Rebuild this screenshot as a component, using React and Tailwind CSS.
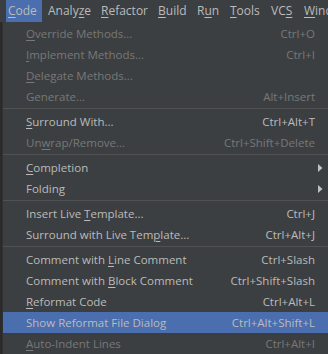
import React from 'react';

const menuBar = [
  { pre: '', key: 'C', post: 'ode', w: 'w-[36px] mr-[4px]', active: true },
  { pre: 'Analy', key: 'z', post: 'e', w: 'w-[53px]' },
  { pre: '', key: 'R', post: 'efactor', w: 'w-[57px]' },
  { pre: '', key: 'B', post: 'uild', w: 'w-[39px]' },
  { pre: 'R', key: 'u', post: 'n', w: 'w-[33px]' },
  { pre: '', key: 'T', post: 'ools', w: 'w-[41px]' },
  { pre: 'VC', key: 'S', post: '', w: 'w-[33px]' },
  { pre: '', key: 'W', post: 'indow', w: 'w-[60px]' },
];

// each group is separated by a line
const groups = [
  [
    { pre: '', key: 'O', post: 'verride Methods...', sc: 'Ctrl+O', off: true },
    { pre: '', key: 'I', post: 'mplement Methods...', sc: 'Ctrl+I', off: true },
    { pre: '', key: 'D', post: 'elegate Methods...', off: true },
    { pre: 'Generate...', sc: 'Alt+Insert', off: true },
  ],
  [
    { pre: '', key: 'S', post: 'urround With...', sc: 'Ctrl+Alt+T' },
    { pre: 'Un', key: 'w', post: 'rap/Remove...', sc: 'Ctrl+Shift+Delete', off: true },
  ],
  [
    { pre: '', key: 'C', post: 'ompletion', sub: true },
    { pre: 'Folding', sub: true },
  ],
  [
    { pre: 'Insert Live ', key: 'T', post: 'emplate...', sc: 'Ctrl+J' },
    { pre: 'Surround with Live Tem', key: 'p', post: 'late...', sc: 'Ctrl+Alt+J' },
  ],
  [
    { pre: 'Comment with ', key: 'L', post: 'ine Comment', sc: 'Ctrl+Slash' },
    { pre: 'Comment with ', key: 'B', post: 'lock Comment', sc: 'Ctrl+Shift+Slash' },
    { pre: '', key: 'R', post: 'eformat Code', sc: 'Ctrl+Alt+L' },
    { pre: 'Show Reformat File Dialog', sc: 'Ctrl+Alt+Shift+L', hot: true },
    { pre: '', key: 'A', post: 'uto-Indent Lines', sc: 'Ctrl+Alt+I', off: true },
  ],
];

const Label = ({ pre, k, post }) => (
  <span className="whitespace-nowrap">
    {pre}
    {k && <span className="underline underline-offset-2">{k}</span>}
    {post}
  </span>
);

const MenuRow = ({ item }) => (
  <div
    className={`flex items-center h-[21px] pl-[23px] pr-[13px] ${item.hot ? 'bg-[#4b6eaf]' : ''} ${item.off ? 'text-[#787878]' : 'text-[#bbbbbb]'}`}
  >
    <Label pre={item.pre} k={item.key} post={item.post} />
    <span className="flex-1" />
    {item.sc && <span className="whitespace-nowrap">{item.sc}</span>}
    {item.sub && (
      <svg width="5" height="8" viewBox="0 0 5 8" className="mr-[-8px]">
        <path d="M0 0 L4.5 4 L0 8 Z" fill="#c0c0c0" />
      </svg>
    )}
  </div>
);

export default function App() {
  return (
    <div
      className="w-[328px] h-[354px] overflow-hidden bg-[#2b2b2b] text-[11.5px]"
      style={{ fontFamily: '"Open Sans", "Noto Sans", sans-serif' }}
    >
      {/* menu bar */}
      <div className="flex h-[22px] bg-[#3c3f41] text-[#bbbbbb] pl-[6px] whitespace-nowrap text-[12px]">
        {menuBar.map((m, i) => (
          <div
            key={i}
            className={`flex items-center shrink-0 pl-[2px] ${m.w} ${m.active ? 'bg-[#4b6eaf]' : ''}`}
          >
            <Label pre={m.pre} k={m.key} post={m.post} />
          </div>
        ))}
      </div>

      {/* dropdown */}
      <div className="ml-[2px] w-[326px] bg-[#3c3f41] border-l border-[#2f3133] pt-[1px]">
        {groups.map((g, gi) => (
          <div key={gi}>
            {gi > 0 && (
              <div className="h-[4px] pt-[1px]">
                <div className="h-px bg-[#515151]" />
              </div>
            )}
            {g.map((item, ii) => (
              <MenuRow key={ii} item={item} />
            ))}
          </div>
        ))}
      </div>
    </div>
  );
}
